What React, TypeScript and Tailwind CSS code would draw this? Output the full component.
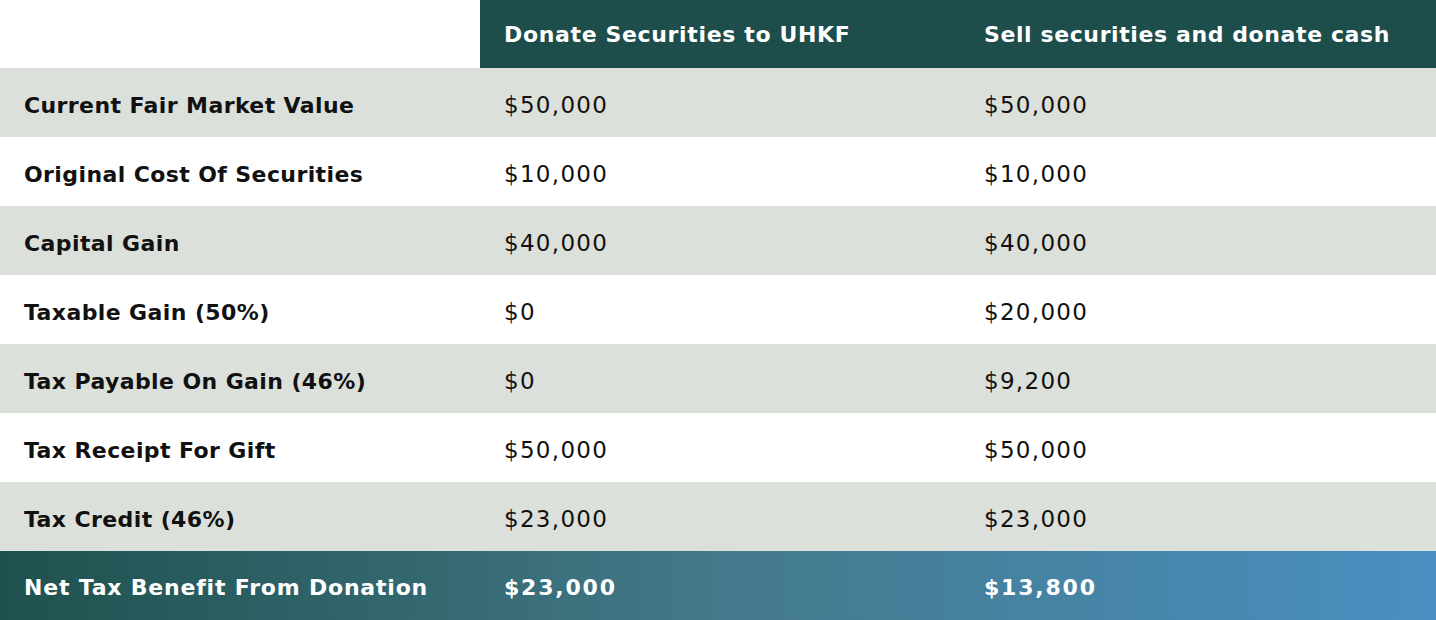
import React from "react";

const rows: [string, string, string][] = [
  ["Current Fair Market Value", "$50,000", "$50,000"],
  ["Original Cost Of Securities", "$10,000", "$10,000"],
  ["Capital Gain", "$40,000", "$40,000"],
  ["Taxable Gain (50%)", "$0", "$20,000"],
  ["Tax Payable On Gain (46%)", "$0", "$9,200"],
  ["Tax Receipt For Gift", "$50,000", "$50,000"],
  ["Tax Credit (46%)", "$23,000", "$23,000"],
];

export default function App() {
  return (
    <div
      className="w-[1436px] h-[620px] bg-white text-[#111] flex flex-col"
      style={{ fontFamily: '"DejaVu Sans", "Liberation Sans", sans-serif' }}
    >
      <div className="grid grid-cols-[480px_480px_476px] h-[68px]">
        <div className="bg-white" />
        <div className="bg-[#1e4e4b] text-white font-bold text-[22px] tracking-[0.65px] pl-6 pt-[21px] leading-[28px]">
          Donate Securities to UHKF
        </div>
        <div className="bg-[#1e4e4b] text-white font-bold text-[22px] tracking-[0.6px] pl-6 pt-[21px] leading-[28px]">
          Sell securities and donate cash
        </div>
      </div>
      {rows.map((r, i) => (
        <div
          key={i}
          className={`grid grid-cols-[480px_480px_476px] h-[69px] items-center pt-[5px] ${
            i % 2 === 0 ? "bg-[#dce0db]" : "bg-white"
          }`}
        >
          <div className="pl-6 font-bold text-[22px] tracking-[0.4px]">{r[0]}</div>
          <div className="pl-6 text-[23px] tracking-[1.3px]">{r[1]}</div>
          <div className="pl-6 text-[23px] tracking-[1.3px]">{r[2]}</div>
        </div>
      ))}
      <div className="grid grid-cols-[480px_480px_476px] h-[69px] items-center pt-1 text-white font-bold text-[22px] tracking-[0.8px] bg-gradient-to-r from-[#1f514e] via-[#43798a] to-[#4a8fc2]">
        <div className="pl-6">Net Tax Benefit From Donation</div>
        <div className="pl-6 tracking-[1.8px]">$23,000</div>
        <div className="pl-6 tracking-[1.8px]">$13,800</div>
      </div>
    </div>
  );
}
